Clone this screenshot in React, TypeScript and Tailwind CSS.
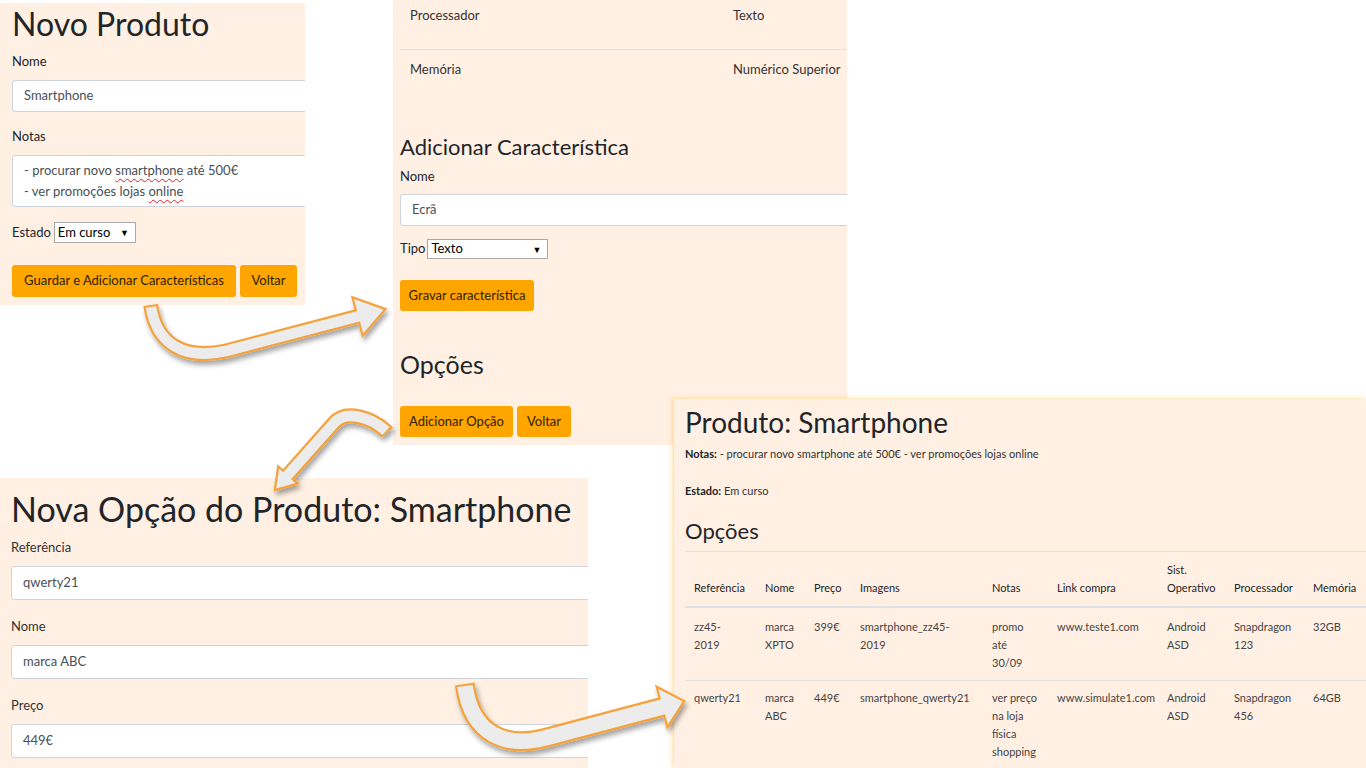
import React from "react";

type Pt = [number, number];

function headPoints(base: Pt, dir: Pt, half: number, len: number): string {
  const [bx, by] = base;
  const m = Math.hypot(dir[0], dir[1]);
  const dx = dir[0] / m;
  const dy = dir[1] / m;
  const px = -dy;
  const py = dx;
  const c1: Pt = [bx + px * half, by + py * half];
  const c2: Pt = [bx - px * half, by - py * half];
  const tip: Pt = [bx + dx * len, by + dy * len];
  return [c1, tip, c2].map((p) => `${p[0].toFixed(1)},${p[1].toFixed(1)}`).join(" ");
}

function Arrow({
  outer,
  inner,
  head,
  ow,
  iw,
}: {
  outer: string;
  inner: string;
  head: string;
  ow: number;
  iw: number;
}) {
  return (
    <g filter="url(#arrowShadow)">
      <path d={outer} fill="none" stroke="#f5a23b" strokeWidth={ow} strokeLinejoin="round" />
      <polygon points={head} fill="#ececec" stroke="#f5a23b" strokeWidth={2.2} strokeLinejoin="miter" />
      <path d={inner} fill="none" stroke="#ececec" strokeWidth={iw} strokeLinejoin="round" />
    </g>
  );
}

function Arrows() {
  return (
    <svg
      className="absolute left-0 top-0 pointer-events-none"
      width={1366}
      height={768}
      viewBox="0 0 1366 768"
    >
      <defs>
        <filter id="arrowShadow" x="-20%" y="-20%" width="150%" height="150%">
          <feDropShadow dx="2" dy="4" stdDeviation="2.5" floodColor="#000" floodOpacity="0.35" />
        </filter>
      </defs>
      <Arrow
        outer="M150.7,305 L151,307 C157,345 185,360 226,351 L359,316"
        inner="M151,307 C157,345 185,360 226,351 L362,315.3"
        head={headPoints([357.5, 316.5], [0.967, -0.254], 20, 29)}
        ow={15}
        iw={10.6}
      />
      <Arrow
        outer="M387.4,432.6 L386,431 C372,418 346,409 334,423 L287,476"
        inner="M386,431 C372,418 346,409 334,423 L285.5,477.5"
        head={headPoints([288, 475], [-0.66, 0.75], 13, 20)}
        ow={15}
        iw={10.6}
      />
      <Arrow
        outer="M464.7,684 L465,686 C472,735 506,748 545,738 L664,706.5"
        inner="M465,686 C472,735 506,748 545,738 L666,706"
        head={headPoints([662, 707], [0.966, -0.256], 21, 23)}
        ow={20}
        iw={15.6}
      />
    </svg>
  );
}

function Input({ text, h }: { text: string; h: string }) {
  return (
    <div
      className={`${h} w-[700px] rounded-[3px] border border-[#ced4da] bg-white pl-[11px] flex items-center text-[13px] text-[#495057]`}
    >
      {text}
    </div>
  );
}

function Select({ w, h, text }: { w: string; h: string; text: string }) {
  return (
    <div
      className={`${w} ${h} border border-[#a9a9a9] bg-white flex items-center justify-between pl-[3px] pr-[6px] text-[13px] text-black`}
    >
      <span>{text}</span>
      <span className="text-[9px] leading-none">▼</span>
    </div>
  );
}

function Btn({ w, h, children }: { w: string; h: string; children: React.ReactNode }) {
  return (
    <div
      className={`${w} ${h} rounded-[3px] bg-[#ffa500] flex items-center justify-center text-[13px] text-[#2b2200] whitespace-nowrap`}
    >
      {children}
    </div>
  );
}

function PanelA() {
  return (
    <div className="absolute left-0 top-[3px] w-[305px] h-[302px] bg-[#fff0e3] overflow-hidden pl-[12px] pt-[1px]">
      <div className="text-[32px] leading-[40px] text-[#212529] whitespace-nowrap">Novo Produto</div>
      <div className="mt-[8px] text-[13px] leading-[19px]">Nome</div>
      <div className="mt-[9px]">
        <Input text="Smartphone" h="h-[32px]" />
      </div>
      <div className="mt-[15px] text-[13px] leading-[19px]">Notas</div>
      <div className="mt-[9px] h-[52px] w-[700px] rounded-[3px] border border-[#ced4da] bg-white pl-[11px] pt-[4px] text-[13px] leading-[21px] text-[#495057]">
        <div>
          - procurar novo{" "}
          <span className="underline decoration-wavy decoration-[#e02020] decoration-1 underline-offset-[3px]">
            smartphone
          </span>{" "}
          até 500€
        </div>
        <div>
          - ver promoções lojas{" "}
          <span className="underline decoration-wavy decoration-[#e02020] decoration-1 underline-offset-[3px]">
            online
          </span>
        </div>
      </div>
      <div className="mt-[15px] flex items-center gap-[3px] text-[13px]">
        <span>Estado</span>
        <Select w="w-[82px]" h="h-[21px]" text="Em curso" />
      </div>
      <div className="mt-[22px] flex gap-[4px]">
        <Btn w="w-[224px]" h="h-[32px]">Guardar e Adicionar Características</Btn>
        <Btn w="w-[57px]" h="h-[32px]">Voltar</Btn>
      </div>
    </div>
  );
}

function PanelB() {
  return (
    <div className="absolute left-[393px] top-0 w-[454px] h-[445px] bg-[#fff0e3] overflow-hidden pl-[7px]">
      <div className="grid grid-cols-[323px_1fr] h-[50px] border-b border-[#dee2e6] pt-[6px] text-[13px] leading-[19px] text-[#333]">
        <div className="pl-[10px]">Processador</div>
        <div className="pl-[10px]">Texto</div>
      </div>
      <div className="grid grid-cols-[323px_1fr] pt-[10px] text-[13px] leading-[19px] text-[#333]">
        <div className="pl-[10px]">Memória</div>
        <div className="pl-[10px] whitespace-nowrap">Numérico Superior</div>
      </div>
      <div className="mt-[54px] text-[22px] leading-[28px] whitespace-nowrap">Adicionar Característica</div>
      <div className="mt-[6px] text-[13px] leading-[19px]">Nome</div>
      <div className="mt-[8px]">
        <Input text="Ecrã" h="h-[32px]" />
      </div>
      <div className="mt-[13px] flex items-center gap-[2px] text-[13px]">
        <span>Tipo</span>
        <Select w="w-[121px]" h="h-[20px]" text="Texto" />
      </div>
      <div className="mt-[21px] flex">
        <Btn w="w-[134px]" h="h-[31px]">Gravar característica</Btn>
      </div>
      <div className="mt-[38px] text-[25px] leading-[30px]">Opções</div>
      <div className="mt-[27px] flex gap-[4px]">
        <Btn w="w-[113px]" h="h-[31px]">Adicionar Opção</Btn>
        <Btn w="w-[54px]" h="h-[31px]">Voltar</Btn>
      </div>
    </div>
  );
}

function PanelC() {
  return (
    <div className="absolute left-0 top-[478px] w-[588px] h-[290px] bg-[#fff0e3] overflow-hidden pl-[11px] pt-[11px]">
      <div className="text-[34px] leading-[40px] whitespace-nowrap">Nova Opção do Produto: Smartphone</div>
      <div className="mt-[9px] text-[13px] leading-[19px] text-[#333]">Referência</div>
      <div className="mt-[9px]">
        <Input text="qwerty21" h="h-[34px]" />
      </div>
      <div className="mt-[17px] text-[13px] leading-[19px] text-[#333]">Nome</div>
      <div className="mt-[9px]">
        <Input text="marca ABC" h="h-[34px]" />
      </div>
      <div className="mt-[17px] text-[13px] leading-[19px] text-[#333]">Preço</div>
      <div className="mt-[9px]">
        <Input text="449€" h="h-[34px]" />
      </div>
    </div>
  );
}

const COLS = "grid grid-cols-[71px_49px_46px_132px_65px_110px_67px_79px_62px]";

function Cell({ children }: { children: React.ReactNode }) {
  return <div className="pl-[9px] whitespace-nowrap">{children}</div>;
}

function PanelD() {
  return (
    <div className="absolute left-[674px] top-[399px] w-[692px] h-[369px] bg-[#fff0e3] overflow-hidden shadow-[-2px_-1px_4px_0px_rgba(255,205,100,0.6)] pl-[11px] pt-[8px]">
      <div className="text-[28px] leading-[30px] whitespace-nowrap">Produto: Smartphone</div>
      <div className="mt-[9px] text-[11px] leading-[16px] text-[#333] whitespace-nowrap">
        <b className="text-[#212529]">Notas:</b> - procurar novo smartphone até 500€ - ver promoções lojas online
      </div>
      <div className="mt-[21px] text-[11px] leading-[16px] text-[#333]">
        <b className="text-[#212529]">Estado:</b> Em curso
      </div>
      <div className="mt-[18px] text-[22px] leading-[28px]">Opções</div>
      <div className="mt-[6px] border-t border-[#dee2e6] text-[11px] leading-[18px]">
        <div className={`${COLS} items-end pt-[9px] pb-[9px] border-b-2 border-[#dee2e6] text-[#212529]`}>
          <Cell>Referência</Cell>
          <Cell>Nome</Cell>
          <Cell>Preço</Cell>
          <Cell>Imagens</Cell>
          <Cell>Notas</Cell>
          <Cell>Link compra</Cell>
          <Cell>
            Sist.
            <br />
            Operativo
          </Cell>
          <Cell>Processador</Cell>
          <Cell>Memória</Cell>
        </div>
        <div className={`${COLS} pt-[10px] pb-[8px] border-b border-[#dee2e6] text-[#444]`}>
          <Cell>
            zz45-
            <br />
            2019
          </Cell>
          <Cell>
            marca
            <br />
            XPTO
          </Cell>
          <Cell>399€</Cell>
          <Cell>
            smartphone_zz45-
            <br />
            2019
          </Cell>
          <Cell>
            promo
            <br />
            até
            <br />
            30/09
          </Cell>
          <Cell>www.teste1.com</Cell>
          <Cell>
            Android
            <br />
            ASD
          </Cell>
          <Cell>
            Snapdragon
            <br />
            123
          </Cell>
          <Cell>32GB</Cell>
        </div>
        <div className={`${COLS} pt-[8px] text-[#444]`}>
          <Cell>qwerty21</Cell>
          <Cell>
            marca
            <br />
            ABC
          </Cell>
          <Cell>449€</Cell>
          <Cell>smartphone_qwerty21</Cell>
          <Cell>
            ver preço
            <br />
            na loja
            <br />
            física
            <br />
            shopping
          </Cell>
          <Cell>www.simulate1.com</Cell>
          <Cell>
            Android
            <br />
            ASD
          </Cell>
          <Cell>
            Snapdragon
            <br />
            456
          </Cell>
          <Cell>64GB</Cell>
        </div>
      </div>
    </div>
  );
}

export default function App() {
  return (
    <div className="relative w-[1366px] h-[768px] overflow-hidden bg-white font-['Lato',sans-serif] text-[#212529]">
      <PanelA />
      <PanelB />
      <PanelC />
      <PanelD />
      <Arrows />
    </div>
  );
}
